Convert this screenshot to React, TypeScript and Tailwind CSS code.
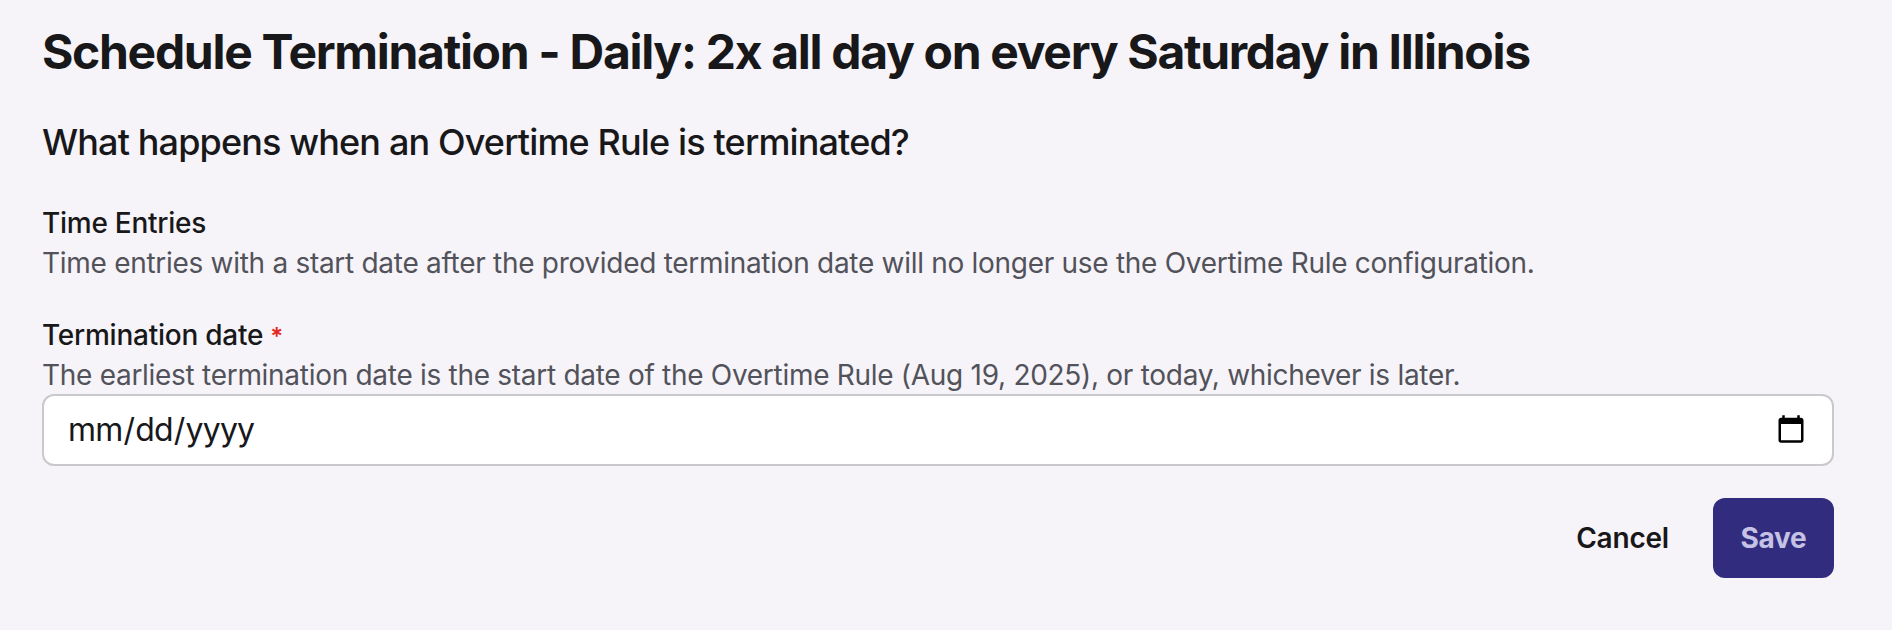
export default function App() {
  return (
    <div className="min-h-[630px] w-full bg-[#f6f4f8] pl-[42px] pr-[58px] pt-[20px] font-['Inter',sans-serif] text-[#18181b]">
      <h1 className="text-[48px] font-bold leading-[64px] tracking-[-1.31px]">
        Schedule Termination - Daily: 2x all day on every Saturday in Illinois
      </h1>
      <h2 className="mt-[34px] text-[36px] font-medium leading-[48px] tracking-[-0.86px]">
        What happens when an Overtime Rule is terminated?
      </h2>
      <div className="mt-[37px] text-[28px] font-medium leading-[40px] tracking-[-0.25px]">Time Entries</div>
      <p className="text-[28px] leading-[40px] tracking-[-0.29px] text-[#52525b]">
        Time entries with a start date after the provided termination date will no longer use the Overtime Rule configuration.
      </p>
      <label className="mt-[32px] block text-[28px] font-medium leading-[40px] tracking-[-0.25px]">
        Termination date <span className="text-[24px] font-semibold leading-none text-[#e5281f]">*</span>
      </label>
      <p className="text-[28px] leading-[40px] tracking-[-0.29px] text-[#52525b]">
        The earliest termination date is the start date of the Overtime Rule (Aug 19, 2025), or today, whichever is later.
      </p>
      <input
        type="date"
        className="-mt-px block h-[72px] w-full rounded-[12px] border-2 border-[#c9c8cb] bg-white px-[23px] text-[32px] tracking-[-0.8px] text-[#18181b]"
      />
      <div className="mt-[32px] flex items-center justify-end gap-[44px]">
        <button className="text-[28px] font-semibold tracking-[-0.2px]">Cancel</button>
        <button className="h-[80px] w-[121px] rounded-[12px] bg-[#322c7f] text-[28px] font-bold tracking-[-0.3px] text-[#c5c2e5]">Save</button>
      </div>
    </div>
  );
}
